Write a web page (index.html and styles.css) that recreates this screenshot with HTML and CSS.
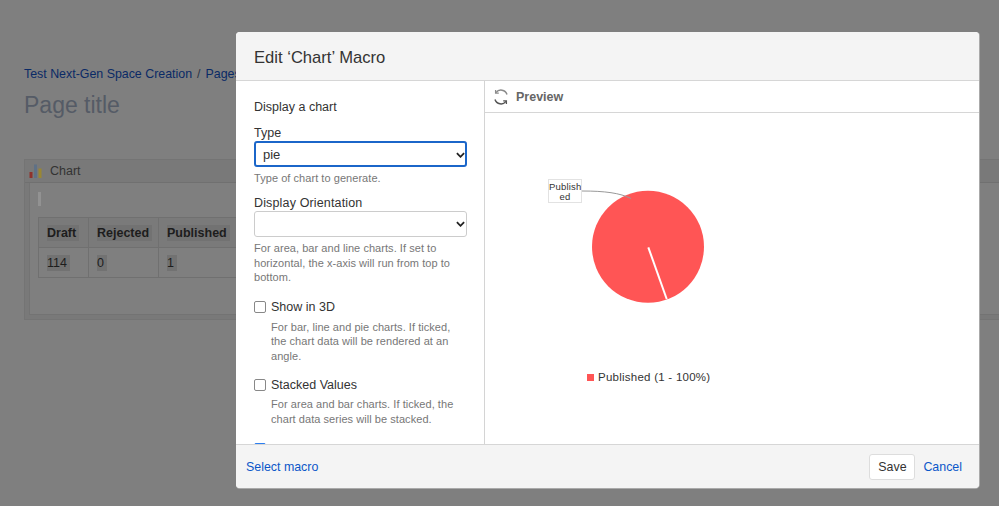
FILE: index.html
```html
<!DOCTYPE html>
<html lang="en">
<head>
<meta charset="utf-8">
<title>Edit Chart Macro</title>
<link rel="stylesheet" href="styles.css">
</head>
<body>
<main class="page">
  <nav class="crumbs"><a>Test Next-Gen Space Creation</a><span class="sep">/</span><a>Pages</a></nav>
  <h1 class="title">Page title</h1>
  <section class="macro">
    <header class="macro-head">
      <svg class="macro-icon" width="13" height="14" viewBox="0 0 13 14"><rect x="0.500" y="8" width="3" height="6" fill="#8f322c"/><rect x="5" y="0.500" width="3" height="13.500" fill="#5f7186"/><rect x="9.500" y="4.500" width="3" height="9.500" fill="#9a8733"/></svg>
      <span>Chart</span>
    </header>
    <div class="macro-body">
      <div class="cursor"></div>
      <table class="tbl">
        <tr><th><mark>Draft</mark></th><th><mark>Rejected</mark></th><th><mark>Published</mark></th><th></th></tr>
        <tr><td><mark>114</mark></td><td><mark>0</mark></td><td><mark>1</mark></td><td></td></tr>
      </table>
    </div>
  </section>
</main>
<div class="dialog">
  <header class="dlg-head"><h2>Edit ‘Chart’ Macro</h2></header>
  <div class="dlg-main">
    <form class="options">
      <p class="lead">Display a chart</p>
      <label class="lbl">Type</label>
      <div class="sel focus"><span>pie</span><svg width="9" height="6" viewBox="0 0 10 6"><path d="M1 1l4 4 4-4" fill="none" stroke="#222" stroke-width="2"/></svg></div>
      <p class="hint">Type of chart to generate.</p>
      <label class="lbl l2">Display Orientation</label>
      <div class="sel"><span></span><svg width="9" height="6" viewBox="0 0 10 6"><path d="M1 1l4 4 4-4" fill="none" stroke="#222" stroke-width="2"/></svg></div>
      <p class="hint">For area, bar and line charts. If set to horizontal, the x-axis will run from top to bottom.</p>
      <div class="check"><i class="box"></i><span>Show in 3D</span></div>
      <p class="hint sub">For bar, line and pie charts. If ticked, the chart data will be rendered at an angle.</p>
      <div class="check c2"><i class="box"></i><span>Stacked Values</span></div>
      <p class="hint sub">For area and bar charts. If ticked, the chart data series will be stacked.</p>
      <div class="check c3"><i class="box on"></i><span>Show legend</span></div>
    </form>
    <section class="preview">
      <div class="pv-head">
        <svg width="16" height="16" viewBox="0 0 16 16" fill="none" stroke="#6a6a6a" stroke-width="1.500"><path d="M14 5.500A6.300 6.300 0 0 0 3 3.600" stroke="#8a8a8a"/><path d="M2.600 1v3.200h3.200" stroke="#8a8a8a" stroke-width="1.300"/><path d="M2 10.500a6.300 6.300 0 0 0 11 1.900" stroke="#555"/><path d="M13.400 15v-3.200h-3.200" stroke="#555" stroke-width="1.300"/></svg>
        <span>Preview</span>
      </div>
      <div class="chart">
        <svg class="pie" width="260" height="140" viewBox="0 0 260 140">
          <circle cx="163" cy="75.800" r="56" fill="#ff5555"/>
          <path d="M163.300 76.300L181.700 128" stroke="#fff" stroke-width="2" fill="none"/>
          <path d="M97 20C120 20 135 22 146 27.500" stroke="#999" fill="none"/>
        </svg>
        <div class="callout">Publish<br>ed</div>
        <div class="legend"><i></i><span>Published (1 - 100%)</span></div>
      </div>
    </section>
  </div>
  <footer class="dlg-foot">
    <a class="link">Select macro</a>
    <div class="actions"><button type="button" class="save">Save</button><a class="link">Cancel</a></div>
  </footer>
</div>
</body>
</html>
```
FILE: styles.css
```css
* { box-sizing: border-box; }
html, body { margin: 0; height: 100%; }
body { background: #7f7f7f; font-family: "Liberation Sans", Arial, sans-serif; color: #222; overflow: hidden; width: 999px; height: 506px; position: relative; }
.page { padding: 67px 0 0 24px; }
.crumbs { font-size: 12.400px; line-height: 15px; color: #0a2a66; white-space: nowrap; }
.crumbs .sep { color: #2c3545; margin: 0 5px 0 5px; }
.title { margin: 8px 0 0; font-size: 23px; line-height: 30px; font-weight: 400; color: #555b66; }
.macro { margin-top: 39px; height: 161px; background: #797979; border: 1px solid #747474; border-right: 0; }
.macro-head { height: 23px; display: flex; align-items: center; padding-left: 4px; gap: 8px; font-size: 12.500px; color: #333; border-bottom: 1px solid #707070; }
.macro-icon { flex: none; }
.macro-body { margin-left: 4px; padding: 9px 8px; border-left: 1px solid #737373; border-bottom: 1px solid #737373; height: 132px; background: #7f7f7f; }
.cursor { width: 3px; height: 14px; background: #929292; }
.tbl { margin-top: 11px; border-collapse: collapse; font-size: 12.500px; color: #1d1d1d; table-layout: fixed; width: 600px; }
.tbl th, .tbl td { border: 1px solid #707070; padding: 0 8px; text-align: left; height: 30px; }
.tbl th { background: #7a7a7a; }
.tbl th:nth-child(1) { width: 50px; }
.tbl th:nth-child(2) { width: 70px; }
.tbl th:nth-child(3) { width: 78px; }
mark { background: #727272; color: inherit; padding: 1px 3px 1px 0; }
.dialog { position: absolute; left: 236px; top: 32px; width: 743px; height: 456px; background: #fff; border-radius: 4px; display: flex; flex-direction: column; overflow: hidden; box-shadow: 1px 0 0 #aaa, 0 1px 0 #aaa; }
.dlg-head { height: 49px; flex: none; background: #f4f4f4; border-bottom: 1px solid #d6d6d6; display: flex; align-items: center; padding: 4px 0 0 18px; }
.dlg-head h2 { margin: 0; font-size: 16.600px; font-weight: 400; color: #333; }
.dlg-main { flex: 1; display: flex; min-height: 0; overflow: hidden; }
.options { width: 249px; flex: none; padding: 18px 18px 0; border-right: 1px solid #d4d4d4; overflow: hidden; font-size: 12.500px; color: #333; }
.options p { margin: 0; }
.lead { line-height: 16px; }
.lbl { display: block; line-height: 16px; margin-top: 10px; }
.l2 { margin-top: 9px; letter-spacing: .15px; }
.sel { width: 213px; height: 26px; border: 1px solid #ccc; border-radius: 3px; background: #fff; display: flex; align-items: center; justify-content: space-between; padding: 1px 1px 0 8px; font-size: 13px; }
.focus { border: 2px solid #1b66c9; padding-left: 7px; padding-right: 0; }
.options .hint { margin-top: 4px; font-size: 11px; line-height: 14.800px; color: #777; letter-spacing: .05px; }
.check { display: flex; align-items: center; gap: 5px; line-height: 16px; margin-top: 14px; }
.check.c2 { margin-top: 13px; }
.box { width: 12px; height: 12px; border: 1px solid #888; border-radius: 2px; background: #fff; flex: none; }
.box.on { background: #2d7ff0; border-color: #2d7ff0; }
.options .sub { padding-left: 17px; margin-top: 4.400px; }
.check.c3 { margin-top: 14px; }
.preview { flex: 1; min-width: 0; }
.pv-head { height: 32px; border-bottom: 1px solid #d6d6d6; display: flex; align-items: center; gap: 7px; padding-left: 8px; font-size: 12.500px; font-weight: 700; color: #666; }
.chart { position: relative; height: 331px; }
.pie { position: absolute; left: 0; top: 58px; }
.callout { position: absolute; left: 63px; top: 66px; width: 34px; height: 24px; background: #fff; border: 1px solid #e2e2e2; font-size: 9.500px; line-height: 9.500px; letter-spacing: .2px; text-align: center; color: #333; padding-top: 2px; overflow: hidden; white-space: nowrap; }
.legend { position: absolute; left: 102px; top: 257px; display: flex; align-items: center; gap: 4px; font-size: 11.500px; line-height: 14px; color: #333; letter-spacing: .25px; }
.legend i { width: 7px; height: 7px; background: #ff5555; }
.dlg-foot { height: 44px; flex: none; background: #f4f4f4; border-top: 1px solid #d6d6d6; display: flex; align-items: center; justify-content: space-between; padding: 0 17px 0 10px; font-size: 12.400px; }
.link { color: #0b57c9; }
.actions { display: flex; align-items: center; gap: 8px; }
.save { width: 46px; height: 26px; background: #fff; border: 1px solid #ddd; border-radius: 3px; font: inherit; color: #333; padding: 0; }
```
